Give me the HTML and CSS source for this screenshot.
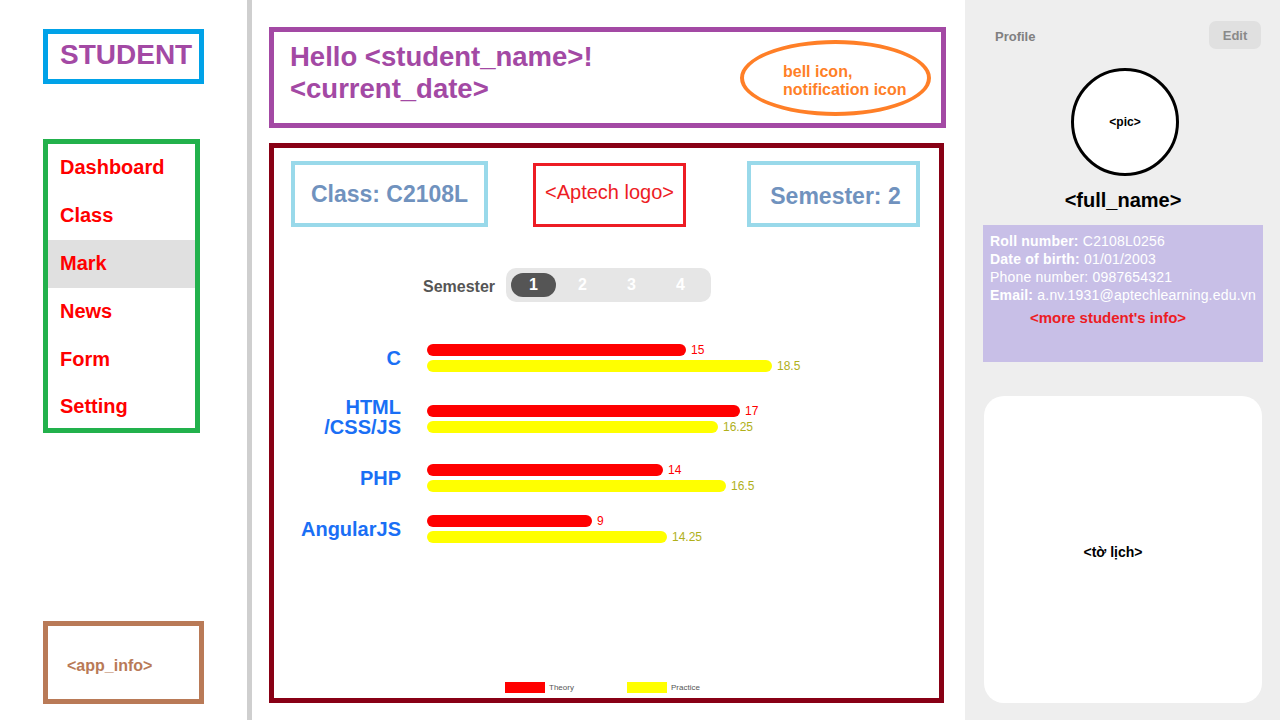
FILE: index.html
```html
<!DOCTYPE html>
<html lang="en">
<head>
<meta charset="utf-8">
<title>Student Dashboard</title>
<link rel="stylesheet" href="styles.css">
</head>
<body>
<div class="app">
  <aside class="sidebar">
    <div class="brand">STUDENT</div>
    <nav class="nav">
      <a class="nav-item">Dashboard</a>
      <a class="nav-item">Class</a>
      <a class="nav-item active">Mark</a>
      <a class="nav-item">News</a>
      <a class="nav-item">Form</a>
      <a class="nav-item">Setting</a>
    </nav>
    <div class="app-info">&lt;app_info&gt;</div>
  </aside>

  <main class="main">
    <header class="greet">
      <div class="greet-text">Hello &lt;student_name&gt;!<br>&lt;current_date&gt;</div>
      <div class="notif">bell icon,<br>notification icon</div>
    </header>

    <section class="marks">
      <div class="marks-top">
        <div class="info-box">Class: C2108L</div>
        <div class="logo-box">&lt;Aptech logo&gt;</div>
        <div class="info-box sem-box">Semester: 2</div>
      </div>

      <div class="sem-switch">
        <span class="sem-label">Semester</span>
        <div class="seg">
          <span class="seg-item active">1</span>
          <span class="seg-item">2</span>
          <span class="seg-item">3</span>
          <span class="seg-item">4</span>
        </div>
      </div>

      <div class="chart">
        <div class="chart-row">
          <div class="subj">C</div>
          <div class="bars">
            <div class="bar-line"><span class="bar theory" style="width:259px"></span><span class="val theory-val">15</span></div>
            <div class="bar-line"><span class="bar practice" style="width:345px"></span><span class="val practice-val">18.5</span></div>
          </div>
        </div>
        <div class="chart-row">
          <div class="subj">HTML<br>/CSS/JS</div>
          <div class="bars bars-low">
            <div class="bar-line"><span class="bar theory" style="width:313px"></span><span class="val theory-val">17</span></div>
            <div class="bar-line"><span class="bar practice" style="width:291px"></span><span class="val practice-val">16.25</span></div>
          </div>
        </div>
        <div class="chart-row row-down">
          <div class="subj">PHP</div>
          <div class="bars">
            <div class="bar-line"><span class="bar theory" style="width:236px"></span><span class="val theory-val">14</span></div>
            <div class="bar-line"><span class="bar practice" style="width:299px"></span><span class="val practice-val">16.5</span></div>
          </div>
        </div>
        <div class="chart-row row-up">
          <div class="subj">AngularJS</div>
          <div class="bars">
            <div class="bar-line"><span class="bar theory" style="width:165px"></span><span class="val theory-val">9</span></div>
            <div class="bar-line"><span class="bar practice" style="width:240px"></span><span class="val practice-val">14.25</span></div>
          </div>
        </div>
      </div>

      <div class="legend">
        <div class="legend-item"><span class="swatch theory"></span>Theory</div>
        <div class="legend-item"><span class="swatch practice"></span>Practice</div>
      </div>
    </section>
  </main>

  <aside class="profile">
    <div class="profile-head">
      <span class="profile-title">Profile</span>
      <span class="edit-btn">Edit</span>
    </div>
    <div class="avatar">&lt;pic&gt;</div>
    <div class="fullname">&lt;full_name&gt;</div>
    <div class="info">
      <div><b>Roll number:</b> C2108L0256</div>
      <div><b>Date of birth:</b> 01/01/2003</div>
      <div>Phone number: 0987654321</div>
      <div><b>Email:</b> a.nv.1931@aptechlearning.edu.vn</div>
      <div class="more">&lt;more student's info&gt;</div>
    </div>
    <div class="calendar">&lt;tờ lịch&gt;</div>
  </aside>
</div>
</body>
</html>
```

FILE: styles.css
```css
* { box-sizing: border-box; }

html, body {
  margin: 0;
  padding: 0;
  background: #ffffff;
}

body {
  font-family: "Liberation Sans", Arial, sans-serif;
}

.app {
  display: flex;
  width: 1280px;
  height: 720px;
  overflow: hidden;
}

/* ---------- Sidebar ---------- */
.sidebar {
  width: 252px;
  height: 720px;
  border-right: 5px solid #cfcfcf;
  padding: 29px 0 16px 43px;
  display: flex;
  flex-direction: column;
}

.brand {
  width: 161px;
  height: 55px;
  border: 5px solid #00a2e8;
  padding-left: 12px;
  padding-bottom: 3px;
  display: flex;
  align-items: center;
  font-size: 28px;
  font-weight: bold;
  color: #a349a4;
}

.nav {
  margin-top: 55px;
  width: 157px;
  border: 5px solid #22b14c;
  display: flex;
  flex-direction: column;
}

.nav-item {
  height: 48px;
  line-height: 46px;
  padding-left: 12px;
  font-size: 20px;
  font-weight: bold;
  color: #ff0000;
}

.nav-item:last-child {
  height: 44px;
  line-height: 44px;
}

.nav-item.active {
  background: #e0e0e0;
}

.app-info {
  margin-top: auto;
  width: 161px;
  height: 83px;
  border: 5px solid #b97a57;
  padding: 6px 0 0 19px;
  display: flex;
  align-items: center;
  font-size: 16px;
  font-weight: bold;
  color: #b97a57;
}

/* ---------- Main ---------- */
.main {
  width: 713px;
  height: 720px;
  padding: 27px 19px 17px 17px;
  display: flex;
  flex-direction: column;
}

.greet {
  height: 101px;
  border: 5px solid #a349a4;
  display: flex;
  align-items: center;
  justify-content: space-between;
  padding: 0 10px 0 16px;
}

.greet-text {
  align-self: flex-start;
  margin-top: 9px;
  font-size: 27.5px;
  line-height: 32px;
  font-weight: bold;
  color: #a349a4;
}

.notif {
  width: 191px;
  height: 76px;
  border: 4px solid #ff7f27;
  border-radius: 50%;
  padding: 6px 0 0 39px;
  display: flex;
  flex-direction: column;
  justify-content: center;
  font-size: 16px;
  line-height: 18px;
  font-weight: bold;
  color: #ff7f27;
}

.marks {
  margin-top: 15px;
  width: 675px;
  height: 560px;
  border: 5px solid #880015;
  display: flex;
  flex-direction: column;
}

.marks-top {
  display: flex;
  align-items: flex-start;
  padding: 13px 0 0 17px;
}

.info-box {
  width: 197px;
  height: 66px;
  border: 4px solid #99d9ea;
  display: flex;
  align-items: center;
  justify-content: center;
  font-size: 23px;
  font-weight: bold;
  color: #7092be;
}

.logo-box {
  margin-left: 45px;
  margin-top: 2px;
  width: 153px;
  height: 64px;
  border: 3px solid #ed1c24;
  padding-top: 15px;
  text-align: center;
  font-size: 20px;
  line-height: 23px;
  color: #ed1c24;
}

.sem-box {
  width: 173px;
  margin-left: 61px;
  padding-top: 4px;
  padding-left: 4px;
}

.sem-switch {
  margin-top: 41px;
  padding-left: 149px;
  display: flex;
  align-items: center;
  gap: 11px;
}

.sem-label {
  margin-top: 3px;
  font-size: 16px;
  font-weight: bold;
  color: #555555;
}

.seg {
  display: flex;
  gap: 4px;
  padding: 5px 8px 5px 5px;
  background: #e6e6e6;
  border-radius: 10px;
}

.seg-item {
  width: 45px;
  height: 24px;
  border-radius: 12px;
  display: flex;
  align-items: center;
  justify-content: center;
  font-size: 16px;
  font-weight: bold;
  color: #ffffff;
}

.seg-item.active {
  background: #555555;
}

.chart {
  margin-top: 42px;
  display: flex;
  flex-direction: column;
  gap: 25px;
}

.chart-row {
  display: flex;
  align-items: center;
}

.row-down { margin-top: 2px; }
.row-up { margin-top: -2px; }

.subj {
  width: 127px;
  margin-right: 26px;
  text-align: right;
  font-size: 20px;
  line-height: 20px;
  font-weight: bold;
  color: #1a6ff5;
}

.bars {
  display: flex;
  flex-direction: column;
  gap: 4px;
}

.bars-low {
  margin-top: 4px;
}

.bar-line {
  display: flex;
  align-items: center;
  height: 12px;
}

.bar {
  display: block;
  height: 12px;
  border-radius: 6px;
}

.theory { background: #ff0000; }
.practice { background: #ffff00; }

.val {
  margin-left: 5px;
  font-size: 12px;
  line-height: 12px;
}

.theory-val { color: #ff0000; }
.practice-val { color: #b0b01a; }

.legend {
  margin-top: auto;
  padding: 0 0 5px 231px;
  display: flex;
}

.legend-item {
  width: 122px;
  display: flex;
  align-items: center;
  gap: 4px;
  font-size: 8px;
  color: #555555;
}

.swatch {
  display: block;
  width: 40px;
  height: 11px;
}

/* ---------- Profile ---------- */
.profile {
  width: 315px;
  height: 720px;
  background: #eeeeee;
  padding: 21px 17px 17px 18px;
  display: flex;
  flex-direction: column;
}

.profile-head {
  display: flex;
  align-items: center;
  justify-content: space-between;
  padding-left: 12px;
  margin-right: 2px;
}

.profile-title {
  margin-top: 2px;
  font-size: 13px;
  font-weight: bold;
  color: #808080;
}

.edit-btn {
  width: 52px;
  height: 28px;
  border-radius: 7px;
  background: #e0e0e0;
  display: flex;
  align-items: center;
  justify-content: center;
  font-size: 13px;
  font-weight: bold;
  color: #8a8a8a;
}

.avatar {
  align-self: center;
  margin-top: 19px;
  margin-left: 4px;
  width: 108px;
  height: 108px;
  border: 3px solid #000000;
  border-radius: 50%;
  background: #ffffff;
  display: flex;
  align-items: center;
  justify-content: center;
  font-size: 12px;
  font-weight: bold;
  color: #000000;
}

.fullname {
  margin-top: 12px;
  text-align: center;
  font-size: 20px;
  line-height: 24px;
  font-weight: bold;
  color: #000000;
}

.info {
  margin-top: 13px;
  height: 137px;
  background: #c8bfe7;
  padding: 7px;
  font-size: 14px;
  line-height: 18px;
  letter-spacing: 0.2px;
  color: #ffffff;
}

.more {
  margin-top: 5px;
  padding-left: 40px;
  font-size: 15px;
  letter-spacing: 0;
  font-weight: bold;
  color: #ed1c24;
}

.calendar {
  margin: 34px 1px 0;
  flex: 1;
  background: #ffffff;
  border-radius: 20px;
  display: flex;
  align-items: center;
  justify-content: center;
  padding: 4px 20px 0 0;
  font-size: 14px;
  font-weight: bold;
  color: #000000;
}
```
